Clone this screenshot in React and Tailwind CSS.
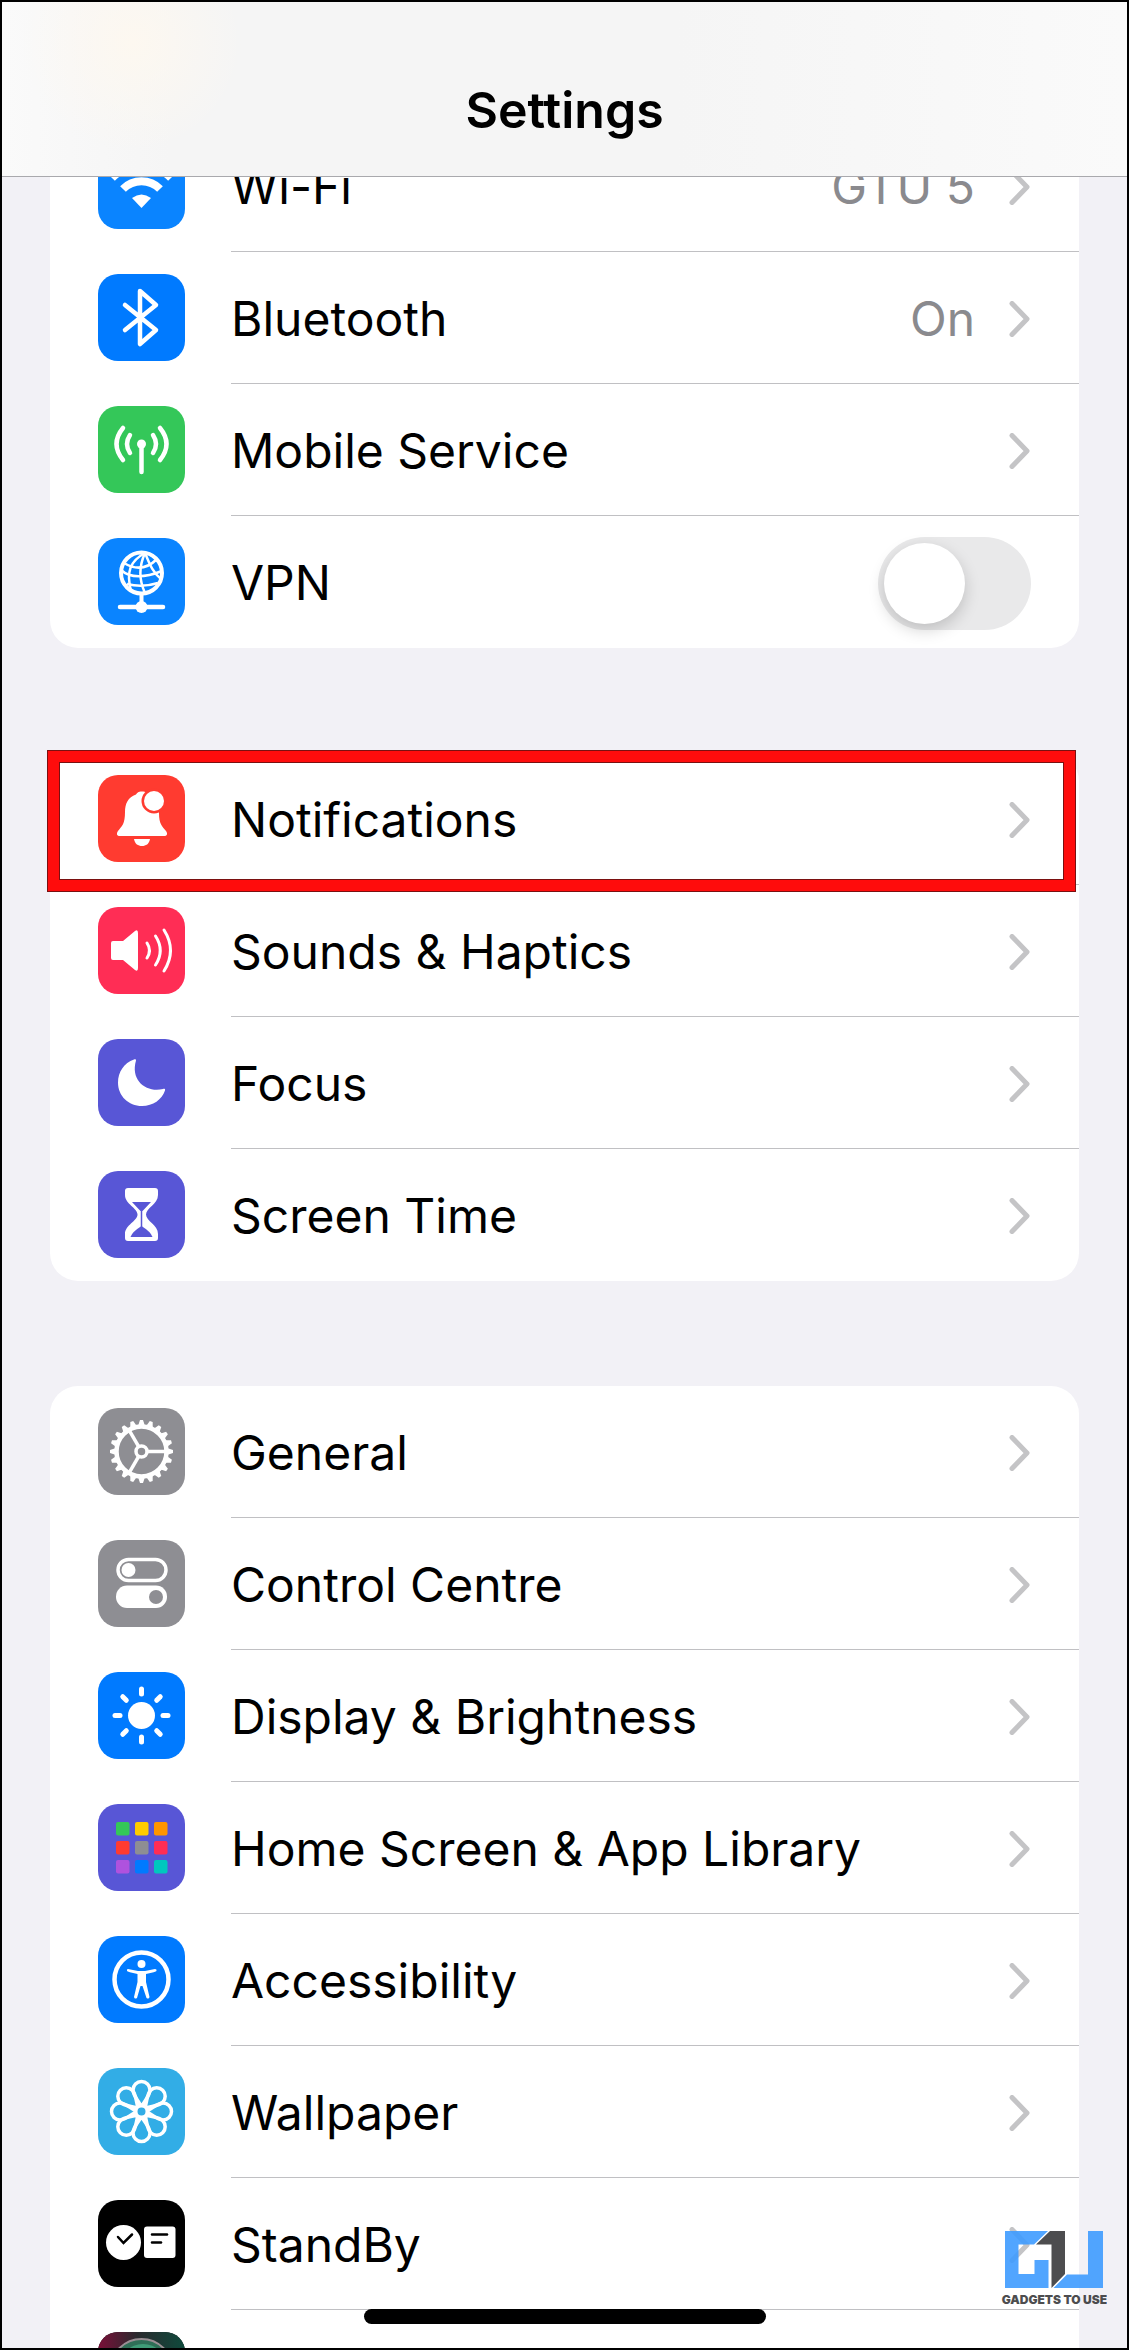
import { useState } from "react";

/* Every glyph is drawn on the 87x87 grid of its tile */
function WifiIcon() {
  return (
    <g fill="none" stroke="#fff" strokeWidth="8">
      <path d="M14 36 A41 41 0 0 1 73 36" />
      <path d="M25 47 A26 26 0 0 1 62 47" />
      <path d="M43.5 66 L34 56 Q43.5 49 53 56 Z" fill="#fff" stroke="none" />
    </g>
  );
}

function BluetoothIcon() {
  return (
    <path
      d="M27 31 L58 56 L42 70 V17 L58 31 L27 56"
      fill="none"
      stroke="#fff"
      strokeWidth="4.5"
      strokeLinecap="round"
      strokeLinejoin="round"
    />
  );
}

function MobileIcon() {
  return (
    <g fill="none" stroke="#fff" strokeWidth="4.5" strokeLinecap="round">
      <circle cx="43.5" cy="38" r="4.5" fill="#fff" stroke="none" />
      <path d="M43.5 40 V66" />
      <path d="M32 29 Q26 38 32 47" />
      <path d="M55 29 Q61 38 55 47" />
      <path d="M25 22 Q12 38 25 54" />
      <path d="M62 22 Q75 38 62 54" />
    </g>
  );
}

function VpnIcon() {
  return (
    <g fill="none" stroke="#fff" strokeWidth="2.5">
      <circle cx="43.5" cy="35" r="20.5" strokeWidth="4" />
      <path d="M47 15 C32 23 28 34 33 53" />
      <path d="M47 15 C41 28 41 42 47 55" />
      <path d="M47 15 C51 24 54 34 63 41" />
      <path d="M26 25 Q44 36 59 21" />
      <path d="M23 32 Q36 44 64 33" />
      <path d="M29 46 Q44 50 60 45" />
      <path d="M43.5 56 V68" strokeWidth="4" />
      <path d="M22 69 H65" strokeWidth="4.5" strokeLinecap="round" />
      <circle cx="43.5" cy="69" r="6" fill="#fff" stroke="none" />
    </g>
  );
}

function BellIcon() {
  return (
    <g fill="#fff">
      <path d="M44 16.5 C40 16.5 39 18 38 19.5 C30 22 27 29 27 37 C27 49 24 51 20 56 C18 59 19 61 22 61 H66 C69 61 70 59 68 56 C64 51 61 49 61 38 C61 28 57 22 50 19.5 C49 18 48 16.5 44 16.5 Z" />
      <path d="M36 64 H52 C51 69 48 71 44 71 C40 71 37 69 36 64 Z" />
      <circle cx="56" cy="26" r="12.5" fill="#ff3b30" />
      <circle cx="56" cy="26" r="10" />
    </g>
  );
}

function SoundIcon() {
  return (
    <g fill="none" stroke="#fff" strokeWidth="3" strokeLinecap="round">
      <path
        d="M15 34 H25 L37 24 Q40 22 40 26 V61 Q40 65 37 63 L25 53 H15 Q13 53 13 51 V36 Q13 34 15 34 Z"
        fill="#fff"
        stroke="none"
      />
      <path d="M49 36 Q54 43.5 49 51" />
      <path d="M57.5 29 Q67 43.5 57.5 58" />
      <path d="M66 23 Q79 43.5 66 64" />
    </g>
  );
}

function MoonIcon() {
  return (
    <path
      d="M36 20.5 C26 24 20 33 20 43.5 C20 57 30.5 67 44 67 C55 67 64 60.5 67 51.5 C67.5 50 66.5 49.5 65 50 C49 54 32 42 38 21.5 C38 20.5 37.5 20 36 20.5 Z"
      fill="#fff"
    />
  );
}

function HourglassIcon() {
  return (
    <g>
      <path
        d="M30 17 H57 Q60 17 60 20 V24 C60 33 48 37 48 43.5 C48 50 60 54 60 63 V67 Q60 70 57 70 H30 Q27 70 27 67 V63 C27 54 39.5 50 39.5 43.5 C39.5 37 27 33 27 24 V20 Q27 17 30 17 Z"
        fill="#fff"
      />
      <path d="M34 31 H53 L46 38.5 Q43.5 42 41 38.5 Z" fill="#5856d6" />
      <path d="M32.5 66 H54.5 Q53 61 43.5 55 Q34 61 32.5 66 Z" fill="#5856d6" />
      <path d="M43.5 39 V56" stroke="#5856d6" strokeWidth="1.5" />
    </g>
  );
}

const teeth = Array.from({ length: 20 }, (_, i) => i * 18);

function GearIcon() {
  return (
    <g fill="none" stroke="#fff" strokeWidth="3.5">
      <circle cx="43.5" cy="43.5" r="25" strokeWidth="4.5" />
      <circle cx="43.5" cy="43.5" r="5.5" />
      {[0, 120, 240].map((a) => (
        <path key={a} d="M50 43.5 H68" transform={`rotate(${a} 43.5 43.5)`} />
      ))}
      {teeth.map((a) => (
        <path
          key={a}
          d="M69 40 L75 42 V45 L69 47 Z"
          fill="#fff"
          stroke="none"
          transform={`rotate(${a} 43.5 43.5)`}
        />
      ))}
    </g>
  );
}

function ControlIcon() {
  return (
    <g>
      <rect x="20" y="19.5" width="48" height="21" rx="10.5" fill="none" stroke="#fff" strokeWidth="3.5" />
      <circle cx="30.5" cy="30" r="7" fill="#fff" />
      <rect x="18" y="45.5" width="51" height="22.5" rx="11" fill="#fff" />
      <circle cx="58" cy="57" r="7" fill="#8e8e93" />
    </g>
  );
}

const spokes = [0, 45, 90, 135, 180, 225, 270, 315];

function SunIcon() {
  return (
    <g stroke="#fff" strokeWidth="5" strokeLinecap="round">
      <circle cx="43.5" cy="43.5" r="13.5" fill="#fff" stroke="none" />
      {spokes.map((a) => (
        <path key={a} d="M43.5 17 V22" transform={`rotate(${a} 43.5 43.5)`} />
      ))}
    </g>
  );
}

const appColors = [
  "#34c759", "#ffcc00", "#ff9500",
  "#ff3b30", "#8e8e93", "#ff2d55",
  "#af52de", "#007aff", "#00c7be",
];

function HomeIcon() {
  return (
    <g>
      {appColors.map((c, i) => (
        <rect
          key={c}
          x={18 + (i % 3) * 19}
          y={18 + Math.floor(i / 3) * 19}
          width="13.5"
          height="13.5"
          rx="2"
          fill={c}
        />
      ))}
    </g>
  );
}

function AccessibilityIcon() {
  return (
    <g fill="#fff">
      <circle cx="43.5" cy="43.5" r="27" fill="none" stroke="#fff" strokeWidth="4.5" />
      <circle cx="43.5" cy="28" r="4" />
      <path d="M30 33 L40 35 H47 L57 33 Q59 33 58.5 35 Q58 36 48 38 V46 L51.5 61 Q51 63.5 48.5 62 L44.5 50 H42.5 L39 62 Q36.5 63.5 36 61 L39.5 46 V38 Q29.5 36 29 35 Q28.5 33 30 33 Z" />
    </g>
  );
}

function FlowerIcon() {
  return (
    <g fill="none" stroke="#fff" strokeWidth="3.5">
      {spokes.map((a) => (
        <path
          key={a}
          d="M43.5 39 C41 33 35 28 35 22 A8.500 8.500 0 0 1 52 22 C52 28 46 33 43.5 39 Z"
          transform={`rotate(${a} 43.5 43.5)`}
        />
      ))}
      <circle cx="43.5" cy="43.5" r="5" fill="#32ade6" strokeWidth="2" />
    </g>
  );
}

function StandByIcon() {
  return (
    <g fill="none" stroke="#000" strokeWidth="2.5" strokeLinecap="round">
      <circle cx="25.5" cy="42.5" r="17.5" fill="#fff" stroke="none" />
      <path d="M20 37 L25.5 43 L34 34.5" />
      <rect x="46" y="26.5" width="31.5" height="31.5" rx="3" fill="#fff" stroke="none" />
      <path d="M54 34.5 H69" />
      <path d="M54 42.5 H63" />
    </g>
  );
}

function SiriIcon() {
  return (
    <g>
      <defs>
        <linearGradient id="siri">
          <stop offset="0" stopColor="#7a0f38" />
          <stop offset="0.45" stopColor="#2a2a2e" />
          <stop offset="1" stopColor="#0f4a3c" />
        </linearGradient>
      </defs>
      <rect width="87" height="87" fill="url(#siri)" />
      <circle cx="43.5" cy="38" r="31" fill="#2f6f57" stroke="#9a8f94" strokeWidth="2" />
      <circle cx="45" cy="36" r="24" fill="#3f9c77" />
    </g>
  );
}

function Chevron() {
  return (
    <svg className="h-9 w-6 shrink-0" viewBox="0 0 24 36" aria-hidden="true">
      <path
        d="M5 2.5 L20 18 L5 33.5"
        fill="none"
        stroke="#c4c4c6"
        strokeWidth="5"
        strokeLinecap="round"
        strokeLinejoin="round"
      />
    </svg>
  );
}

function Tile({ color, children }) {
  return (
    <span className={`mb-px size-[87px] shrink-0 overflow-hidden rounded-[20px] ${color}`}>
      <svg viewBox="0 0 87 87" className="size-full" aria-hidden="true">
        {children}
      </svg>
    </span>
  );
}

const groups = [
  [
    { label: "Wi-Fi", value: "GTU 5", color: "bg-[#0a84ff]", Icon: WifiIcon },
    { label: "Bluetooth", value: "On", color: "bg-[#007aff]", Icon: BluetoothIcon },
    { label: "Mobile Service", color: "bg-[#34c759]", Icon: MobileIcon },
    { label: "VPN", color: "bg-[#0a84ff]", Icon: VpnIcon, toggle: true },
  ],
  [
    { label: "Notifications", color: "bg-[#ff3b30]", Icon: BellIcon, highlight: true },
    { label: "Sounds & Haptics", color: "bg-[#ff2d55]", Icon: SoundIcon },
    { label: "Focus", color: "bg-[#5856d6]", Icon: MoonIcon },
    { label: "Screen Time", color: "bg-[#5856d6]", Icon: HourglassIcon },
  ],
  [
    { label: "General", color: "bg-[#8e8e93]", Icon: GearIcon },
    { label: "Control Centre", color: "bg-[#8e8e93]", Icon: ControlIcon },
    { label: "Display & Brightness", color: "bg-[#007aff]", Icon: SunIcon },
    { label: "Home Screen & App Library", color: "bg-[#5856d6]", Icon: HomeIcon },
    { label: "Accessibility", color: "bg-[#007aff]", Icon: AccessibilityIcon },
    { label: "Wallpaper", color: "bg-[#32ade6]", Icon: FlowerIcon },
    { label: "StandBy", color: "bg-black", Icon: StandByIcon },
    { label: "", name: "Siri", color: "bg-[#1c1c1e]", Icon: SiriIcon },
  ],
];

function Row({ item, last }) {
  const [on, setOn] = useState(false);
  const { label, name, value, color, Icon, toggle, highlight } = item;
  const line = last ? "" : "border-b border-[#c0c0c3]";

  if (toggle) {
    return (
      <li>
        <label className="flex items-center gap-[46px] pl-12">
          <Tile color={color}>
            <Icon />
          </Tile>
          <span className={`flex h-[132px] flex-1 items-center justify-between pt-0.5 pr-12 ${line}`}>
            {label}
            <input
              type="checkbox"
              role="switch"
              checked={on}
              onChange={(e) => setOn(e.target.checked)}
              className="
                h-[93px] w-[153px] appearance-none rounded-full bg-[#e9e9ea] p-1.5
                before:block before:size-[81px] before:rounded-full before:bg-white
                before:shadow-[0_6px_16px_rgba(0,0,0,0.18)]
                checked:bg-[#34c759] checked:before:translate-x-[60px]
              "
            />
          </span>
        </label>
      </li>
    );
  }

  return (
    <li className="relative">
      <a href="#" aria-label={name} className="flex items-center gap-[46px] pl-12">
        <Tile color={color}>
          <Icon />
        </Tile>
        <span className={`flex h-[132px] flex-1 items-center gap-8 pt-0.5 pr-12 ${line}`}>
          <span className="flex-1">{label}</span>
          {value && <span className="text-[#8a8a8e]">{value}</span>}
          <Chevron />
        </span>
      </a>
      {highlight && (
        <div
          className="
            pointer-events-none absolute -top-[3px] right-[3px] -bottom-[7px] -left-[3px] z-10
            border-12 border-[#ff0c0c] outline -outline-offset-1 outline-[#7a1010]
            shadow-[inset_0_0_0_1px_#7a1010]
          "
        />
      )}
    </li>
  );
}

function Watermark() {
  return (
    <div className="absolute right-5 bottom-10 flex flex-col items-center gap-1 opacity-90">
      <svg className="h-[57px] w-[98px]" viewBox="0 0 98 57" aria-hidden="true">
        <path d="M0 0 H43 L29 13.5 H13.5 V43 H29.5 V29 H43.5 V57 H0 Z" fill="#3f9cff" />
        <path d="M45 0 H60 V43 L46.5 57 V13.5 H31 Z" fill="#3a3a3c" />
        <path d="M62 43.5 H83 V0 H98 V57 H48.5 Z" fill="#3f9cff" />
      </svg>
      <span className="text-[12px] leading-4 font-black whitespace-nowrap text-[#3a3a3c]">
        GADGETS TO USE
      </span>
    </div>
  );
}

export default function App() {
  return (
    <div className="relative flex h-screen flex-col overflow-hidden border-2 border-black bg-[#f2f1f6] font-['Inter','Liberation_Sans',sans-serif] text-[48px] leading-[56px] text-black">

      {/* HEADER */}
      <header className="flex h-[175px] shrink-0 items-center justify-center border-b border-[#a9a9ad] bg-[#f6f6f6] bg-[radial-gradient(circle_at_130px_40px,#fdf8f0,transparent_110px),linear-gradient(to_right,#fafafa,#f5f5f5_15%,#f5f5f5_60%,#fafafa)] pt-[42px]">
        <h1 className="text-[50px] font-semibold">Settings</h1>
      </header>

      {/* LIST, scrolled a little under the header */}
      <main className="min-h-0 flex-1 overflow-hidden">
        <div className="-mt-[57px] flex flex-col gap-[105px] px-12">
          {groups.map((items, g) => (
            <ul key={g} className="rounded-[28px] bg-white">
              {items.map((item, i) => (
                <Row key={i} item={item} last={i === items.length - 1} />
              ))}
            </ul>
          ))}
        </div>
      </main>

      {/* WATERMARK */}
      <Watermark />

      {/* HOME INDICATOR */}
      <div className="absolute bottom-6 left-1/2 h-[15px] w-[402px] -translate-x-1/2 rounded-full bg-black" />
    </div>
  );
}
